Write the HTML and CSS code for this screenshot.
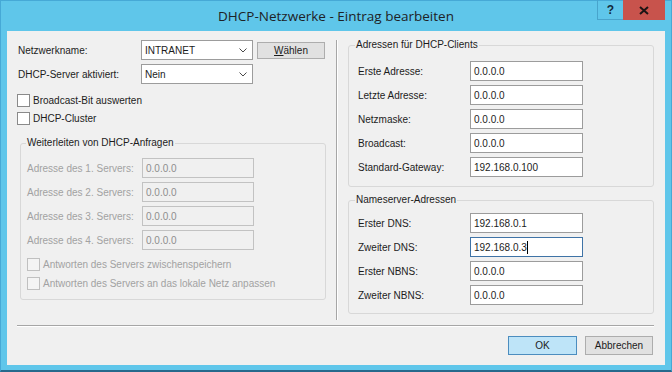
FILE: index.html
```html
<!DOCTYPE html>
<html lang="de">
<head>
  <meta charset="UTF-8" />
  <title>DHCP-Netzwerke - Eintrag bearbeiten</title>
  <link rel="stylesheet" href="styles.css">
</head>
<body>
  <div class="window">
    <div class="titlebar">
      <span class="title">DHCP-Netzwerke - Eintrag bearbeiten</span>
      <div class="caption-buttons">
        <span class="cap-btn help">?</span>
        <span class="cap-btn close">
          <svg width="10" height="9" viewBox="0 0 10 9"><path d="M1 1 L9 8 M9 1 L1 8" stroke="#1b1414" stroke-width="2" fill="none"/></svg>
        </span>
      </div>
    </div>

    <div class="client">
      <div class="main">
        <div class="col-left">
          <div class="row first">
            <label class="lbl-top">Netzwerkname:</label>
            <div class="combo">
              <span>INTRANET</span>
              <svg class="chevron" width="8" height="5" viewBox="0 0 8 5"><path d="M0.5 0.5 L4 4 L7.5 0.5" stroke="#4a4a4a" fill="none"/></svg>
            </div>
            <button class="btn btn-choose"><u>W</u>ählen</button>
          </div>
          <div class="row">
            <label class="lbl-top">DHCP-Server aktiviert:</label>
            <div class="combo">
              <span>Nein</span>
              <svg class="chevron" width="8" height="5" viewBox="0 0 8 5"><path d="M0.5 0.5 L4 4 L7.5 0.5" stroke="#4a4a4a" fill="none"/></svg>
            </div>
          </div>

          <div class="checks">
            <div class="check"><span class="box"></span><span>Broadcast-Bit auswerten</span></div>
            <div class="check"><span class="box"></span><span>DHCP-Cluster</span></div>
          </div>

          <fieldset class="group group-forward">
            <legend>Weiterleiten von DHCP-Anfragen</legend>
            <div class="frow disabled"><label>Adresse des 1. Servers:</label><div class="field">0.0.0.0</div></div>
            <div class="frow disabled"><label>Adresse des 2. Servers:</label><div class="field">0.0.0.0</div></div>
            <div class="frow disabled"><label>Adresse des 3. Servers:</label><div class="field">0.0.0.0</div></div>
            <div class="frow disabled"><label>Adresse des 4. Servers:</label><div class="field">0.0.0.0</div></div>
            <div class="checks-small disabled">
              <div class="check"><span class="box"></span><span>Antworten des Servers zwischenspeichern</span></div>
              <div class="check"><span class="box"></span><span>Antworten des Servers an das lokale Netz anpassen</span></div>
            </div>
          </fieldset>
        </div>

        <div class="vsep"></div>

        <div class="col-right">
          <fieldset class="group group-right group-clients">
            <legend>Adressen für DHCP-Clients</legend>
            <div class="frow"><label>Erste Adresse:</label><div class="field">0.0.0.0</div></div>
            <div class="frow"><label>Letzte Adresse:</label><div class="field">0.0.0.0</div></div>
            <div class="frow"><label>Netzmaske:</label><div class="field">0.0.0.0</div></div>
            <div class="frow"><label>Broadcast:</label><div class="field">0.0.0.0</div></div>
            <div class="frow"><label>Standard-Gateway:</label><div class="field">192.168.0.100</div></div>
          </fieldset>

          <fieldset class="group group-right group-dns">
            <legend>Nameserver-Adressen</legend>
            <div class="frow"><label>Erster DNS:</label><div class="field">192.168.0.1</div></div>
            <div class="frow"><label>Zweiter DNS:</label><div class="field focused">192.168.0.3<span class="caret"></span></div></div>
            <div class="frow"><label>Erster NBNS:</label><div class="field">0.0.0.0</div></div>
            <div class="frow"><label>Zweiter NBNS:</label><div class="field">0.0.0.0</div></div>
          </fieldset>
        </div>
      </div>

      <div class="hsep"></div>

      <div class="footer">
        <button class="btn btn-default">OK</button>
        <button class="btn">Abbrechen</button>
      </div>
    </div>
  </div>
</body>
</html>
```

FILE: styles.css
```css
* {
  box-sizing: border-box;
}

body {
  margin: 0;
  font-family: 'Liberation Sans', Arial, sans-serif;
  font-size: 10px;
  color: #1c1c1c;
}

.window {
  width: 672px;
  height: 372px;
  background: #5fc6ea;
  border: 1px solid #46a9d6;
  border-bottom: 2px solid #27698c;
  padding: 0 6px 5px;
  display: flex;
  flex-direction: column;
}

/* title bar */
.titlebar {
  height: 30px;
  display: flex;
  align-items: center;
  justify-content: center;
  position: relative;
}

.title {
  font-family: 'Open Sans', sans-serif;
  font-size: 13.5px;
  color: #1e2226;
  margin-top: -1px;
}

.caption-buttons {
  position: absolute;
  top: -1px;
  right: 0;
  display: flex;
}

.cap-btn {
  height: 20px;
  display: flex;
  align-items: center;
  justify-content: center;
}

.help {
  width: 26px;
  border: 1px solid #48a4cc;
  border-top: none;
  border-right: none;
  font-weight: bold;
  font-size: 12px;
  color: #14283a;
}

.close {
  width: 42px;
  background: #c8534c;
}

/* client area */
.client {
  flex: 1;
  background: #f0f0f0;
  padding: 8px 11px 0 10px;
}

.main {
  display: flex;
  height: 281px;
}

.col-left {
  width: 309px;
}

.col-right {
  width: 306px;
  margin-left: 10px;
}

.vsep {
  width: 2px;
  height: 280px;
  margin: 1px 0 0 10px;
  border-left: 1px solid #a6a6a6;
  border-right: 1px solid #fff;
}

.row {
  display: flex;
  align-items: center;
  height: 20px;
  margin-top: 4px;
}

.row.first {
  margin-top: 1px;
}

.lbl-top {
  width: 124px;
  padding-left: 1px;
}

.combo {
  width: 112px;
  height: 20px;
  background: #fff;
  border: 1px solid #9c9c9c;
  display: flex;
  align-items: center;
  justify-content: space-between;
  padding: 0 5px 0 3px;
  font-size: 10px;
}

.btn {
  font-family: 'Liberation Sans', Arial, sans-serif;
  font-size: 10px;
  color: #1c1c1c;
  background: #e1e1e1;
  border: 1px solid #adadad;
  height: 19px;
  padding: 0;
}

.btn-choose {
  width: 68px;
  height: 17px;
  margin-left: 4px;
}

.btn-default {
  background: #bee4f8;
  border-color: #4c8dbf;
  width: 69px;
}

/* checkboxes */
.checks {
  margin-top: 10px;
}

.check {
  display: flex;
  align-items: flex-start;
  height: 18px;
  line-height: 13px;
}

.box {
  width: 13px;
  height: 13px;
  background: #fff;
  border: 1px solid #8a8a8a;
  margin-right: 3px;
}

.checks-small {
  margin-top: 8px;
}

.checks-small .check {
  height: 19px;
}

/* group boxes */
.group {
  margin: 7px 0 0 3px;
  width: 306px;
  border: 1px solid #d8d8d8;
  border-radius: 3px;
  padding: 9px 6px 3px;
}

.group legend {
  padding: 0 1px;
  margin-left: -1px;
  line-height: 12px;
}

.group-right {
  margin: 0;
  padding: 10px 9px 9px;
}

.group-right legend {
  margin-left: -3px;
}

.group-dns {
  margin-top: 7px;
  padding: 7px 9px 8px;
}

.frow {
  display: flex;
  align-items: center;
  height: 20px;
}

.frow + .frow {
  margin-top: 4px;
}

.frow label {
  width: 115px;
}

.group-right .frow label {
  width: 112px;
}

.field {
  width: 112px;
  height: 20px;
  background: #fff;
  border: 1px solid #9c9c9c;
  padding-left: 3px;
  display: flex;
  align-items: center;
}

.group-right .field {
  width: 113px;
}

.field.focused {
  border-color: #3f73a6;
}

.caret {
  width: 1px;
  height: 13px;
  background: #000;
}

.disabled {
  color: #a2a2a2;
}

.disabled .field {
  background: #f0f0f0;
  border-color: #c2c2c2;
  color: #8e8e8e;
}

.disabled .box {
  background: #f4f4f4;
  border-color: #c0c0c0;
}

/* bottom */
.hsep {
  margin-top: 5px;
  height: 2px;
  border-top: 1px solid #a6a6a6;
  border-bottom: 1px solid #fff;
}

.footer {
  display: flex;
  justify-content: flex-end;
  gap: 8px;
  margin-top: 9px;
  padding-right: 1px;
}

.footer .btn {
  width: 68px;
}

.footer .btn-default {
  width: 69px;
}
```
